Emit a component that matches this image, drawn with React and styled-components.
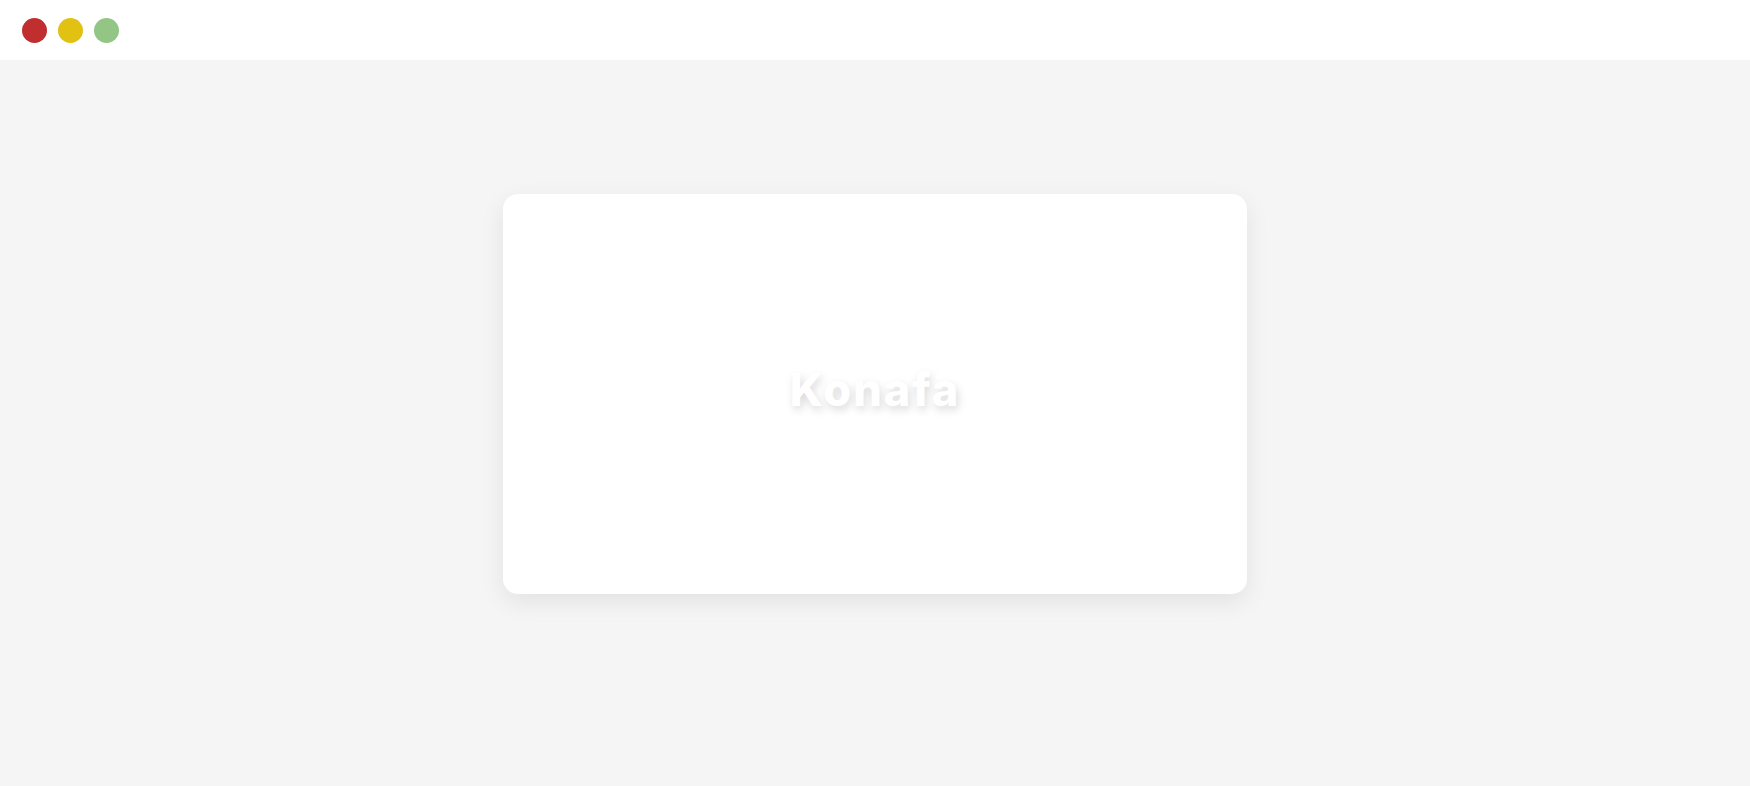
import React from "react";
import styled, { createGlobalStyle } from "styled-components";

const Global = createGlobalStyle`
  html, body { margin: 0; padding: 0; }
  body { background: #f5f5f5; font-family: Inter, "Open Sans", "Liberation Sans", sans-serif; }
`;

const Page = styled.div`
  height: 100vh;
  display: flex;
  flex-direction: column;
  background: #f5f5f5;
  overflow: hidden;
`;

const TitleBar = styled.header`
  height: 60px;
  flex-shrink: 0;
  background: #ffffff;
  display: flex;
  align-items: center;
  gap: 11px;
  padding: 0 0 0 22px;
  box-sizing: border-box;
`;

const Dot = styled.span`
  width: 25px;
  height: 25px;
  border-radius: 50%;
  background: ${(p) => p.$color};
  margin-top: 1px;
`;

const Stage = styled.main`
  flex: 1;
  display: flex;
  justify-content: center;
  align-items: flex-start;
  padding-top: 134px;
`;

const Card = styled.section`
  width: 744px;
  height: 400px;
  background: #ffffff;
  border-radius: 15px;
  box-shadow: 0 8px 24px rgba(0, 0, 0, 0.08);
  display: flex;
  align-items: center;
  justify-content: center;
`;

const Title = styled.h1`
  margin: 0 0 10px;
  font-family: Inter, "Open Sans", "Liberation Sans", sans-serif;
  font-weight: 800;
  font-size: 45px;
  letter-spacing: 2px;
  color: #ffffff;
  text-shadow: 2px 4px 8px rgba(0, 0, 0, 0.15);
`;

export default function App() {
  return (
    <Page>
      <Global />
      <TitleBar>
        <Dot $color="#c02e2f" />
        <Dot $color="#e1c112" />
        <Dot $color="#93c584" />
      </TitleBar>
      <Stage>
        <Card>
          <Title>Konafa</Title>
        </Card>
      </Stage>
    </Page>
  );
}
